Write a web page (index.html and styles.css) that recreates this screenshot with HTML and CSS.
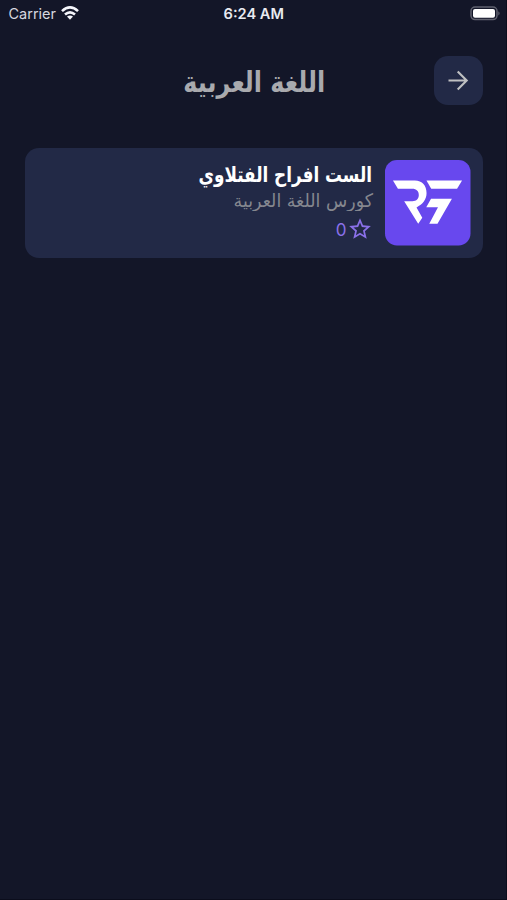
FILE: index.html
```
<!DOCTYPE html>
<html lang="ar" dir="rtl">
<head>
<meta charset="utf-8">
<title>اللغة العربية</title>
<link rel="stylesheet" href="styles.css">
</head>
<body>
<div class="status" dir="ltr">
  <div class="carrier"><span>Carrier</span>
    <svg class="wifi" width="18" height="14" viewBox="0 0 18 14" fill="none" stroke="#f5f6fb" stroke-width="2.6"><path d="M1 5.1Q9-2.3 17 5.1M4 8.5Q9 4.1 14 8.5"/><path d="M6 10.6Q9 8.2 12 10.6L9 13.8Z" fill="#f5f6fb" stroke="none"/></svg>
  </div>
  <div class="time">6:24 AM</div>
  <svg class="battery" width="31" height="15" viewBox="0 0 31 15"><rect x="1" y="1" width="26" height="12.6" rx="4" fill="none" stroke="#60626f" stroke-width="1.5"/><rect x="3" y="3" width="22" height="8.7" rx="2" fill="#fff"/><path d="M28.3 5.2Q31 7.3 28.3 9.5Z" fill="#60626f"/></svg>
</div>
<header class="header">
  <button class="back" aria-label="رجوع"><svg width="24" height="24" viewBox="0 0 24 24" fill="none" stroke="#bfc0c2" stroke-width="2.1"><path d="M1.5 11.5h18M10.7 2.5l9 9-9 9"/></svg></button>
  <h1 class="title"><span>اللغة العربية</span></h1>
</header>
<main class="card">
  <svg class="logo" width="85.5" height="85.5" viewBox="0 0 86 86"><rect width="86" height="86" rx="12" fill="#6848ee"/><g fill="#fff"><path d="M8 20.7H30C37.5 20.7 41.8 26 41.8 33.3C41.8 40 38 44.5 31.7 47.7L37.5 58L33.4 64.2L19.3 41.5H27.5C31.8 41.5 34 39 34 35.3C34 31.3 31.5 29 27.5 29H13Z"/><path d="M41.7 20.7H77.5L72.5 29H46.5Z"/><path d="M46.3 39H67.3L52.8 64.2H44.5L53.3 47.5H41.5Z"/></g></svg>
  <div class="info">
    <h2 class="name"><span>الست افراح الفتلاوي</span></h2>
    <p class="course"><span>كورس اللغة العربية</span></p>
    <div class="rating"><svg width="26" height="26" viewBox="0 0 24 24" fill="#8a70e9"><path d="M22 9.24l-7.19-.62L12 2 9.19 8.63 2 9.24l5.46 4.73L5.82 21 12 17.27 18.18 21l-1.63-7.03zM12 15.4l-3.76 2.27 1-4.28-3.32-2.88 4.38-.38L12 6.1l1.71 4.04 4.38.38-3.32 2.88 1 4.28z"/></svg><span>0</span></div>
  </div>
</main>
</body>
</html>
```
FILE: styles.css
```
* { box-sizing: border-box; }
body { margin: 0; height: 900px; background: #131628; box-shadow: inset -1px -1px #0b0d1c; color: #fff; overflow: hidden; font-family: "DejaVu Sans", sans-serif; }
.status { height: 28px; display: grid; grid-template-columns: 1fr auto 1fr; padding: 0 6px 0 8.5px; align-items: center; font: 14.5px/28px Inter, sans-serif; color: #d6d7df; }
.carrier { display: flex; align-items: center; gap: 5px; }
.wifi { margin-top: -3px; }
.time { font-weight: 600; font-size: 14.6px; margin-left: -2px; color: #e9eaf0; }
.battery { justify-self: end; margin-top: -2px; }
.header { display: grid; grid-template-columns: 49px 1fr 49px; padding: 28px 24px 0; height: 120px; align-items: start; }
.back { width: 49px; height: 49px; border: 0; border-radius: 14px; padding: 0; background: #222946; display: grid; place-items: center; }
.title { margin: 0; height: 49px; font-size: 25px; line-height: 53px; text-align: center; color: #a9aaae; }
.title span, .name span, .course span { display: inline-block; white-space: nowrap; }
.title span { transform: scale(.955, 1.15); margin-left: 1px; }
.name span { transform: scale(.885, 1.12); transform-origin: right center; }
.course span { transform: scale(1.025, 1.1); transform-origin: right center; }
.card { margin: 0 24px 0 25px; height: 110px; border-radius: 14px; background: #222946; display: flex; padding: 12px 12.5px 0; gap: 12.5px; }
.info { display: flex; flex-direction: column; align-items: flex-start; }
.name { margin: 0; height: 29px; line-height: 28px; font-size: 19px; }
.course { margin: 0; height: 27px; line-height: 23px; font-size: 17px; color: #85878f; }
.rating { display: flex; align-items: center; height: 26px; color: #8a70e9; font: 17px/26px Inter, sans-serif; gap: 0; }
.rating span { padding-top: 2px; }
```
